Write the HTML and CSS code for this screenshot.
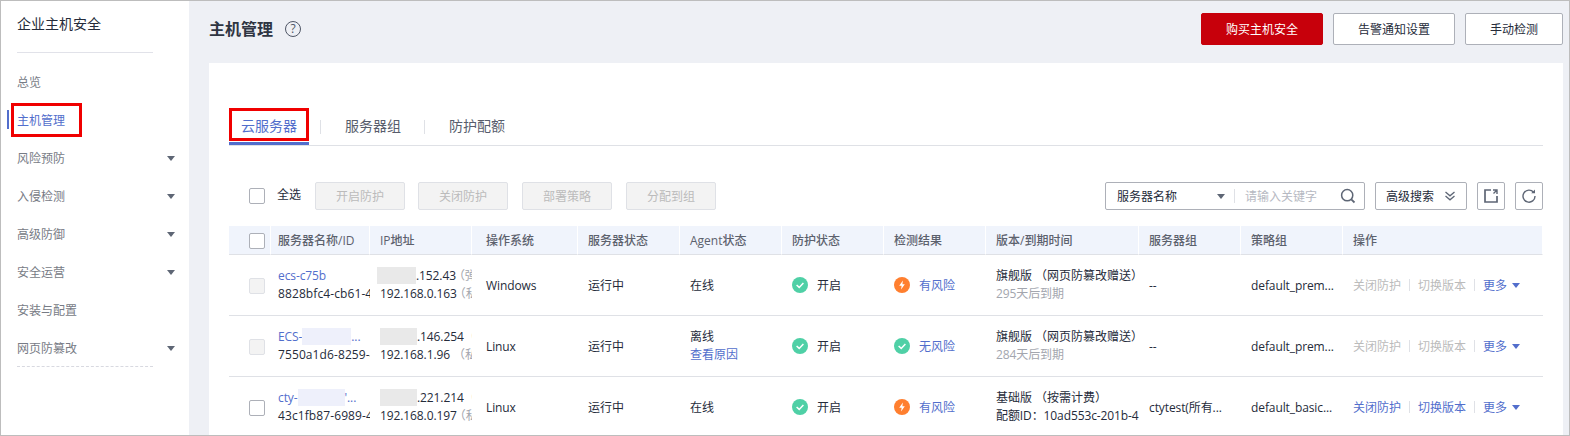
FILE: index.html
```html
<!DOCTYPE html>
<html lang="zh-CN">
<head>
<meta charset="utf-8">
<title>主机管理</title>
<link rel="stylesheet" href="styles.css">
</head>
<body>
<div class="frame">
  <aside class="sidebar">
    <div class="side-title">企业主机安全</div>
    <nav class="nav">
      <div class="nav-item">总览</div>
      <div class="nav-item active">主机管理<span class="side-bar"></span><span class="red-box nav-box"></span></div>
      <div class="nav-item">风险预防<span class="caret"></span></div>
      <div class="nav-item">入侵检测<span class="caret"></span></div>
      <div class="nav-item">高级防御<span class="caret"></span></div>
      <div class="nav-item">安全运营<span class="caret"></span></div>
      <div class="nav-item">安装与配置</div>
      <div class="nav-item">网页防篡改<span class="caret"></span></div>
    </nav>
    <div class="side-dash"></div>
  </aside>
  <main class="main">
    <header class="header">
      <div class="heading"><h1>主机管理</h1><span class="help">?</span></div>
      <div class="header-actions">
        <button class="btn primary">购买主机安全</button>
        <button class="btn wide">告警通知设置</button>
        <button class="btn manual">手动检测</button>
      </div>
    </header>
    <section class="card">
      <div class="tabs">
        <div class="tab current">云服务器<span class="red-box tab-box"></span></div>
        <span class="tab-sep first"></span>
        <div class="tab">服务器组</div>
        <span class="tab-sep"></span>
        <div class="tab">防护配额</div>
      </div>
      <div class="toolbar">
        <div class="toolbar-left">
          <span class="check"></span>
          <span class="all">全选</span>
          <button class="btn disabled">开启防护</button>
          <button class="btn disabled">关闭防护</button>
          <button class="btn disabled">部署策略</button>
          <button class="btn disabled">分配到组</button>
        </div>
        <div class="toolbar-right">
          <div class="search">
            <span class="search-field">服务器名称<span class="caret"></span></span>
            <span class="search-sep"></span>
            <span class="placeholder">请输入关键字</span>
            <svg class="search-icon" viewBox="0 0 16 16" width="16" height="16"><circle cx="7.2" cy="7.2" r="5.6" fill="none" stroke="#5e6675" stroke-width="1.5"/><path d="M11.3 11.3 14.5 14.5" stroke="#5e6675" stroke-width="1.8"/></svg>
          </div>
          <div class="advanced">高级搜索
            <svg viewBox="0 0 10 10" width="10" height="10"><path d="M0.5 1 5 4.8 9.5 1M0.5 5 5 8.8 9.5 5" fill="none" stroke="#5e6675" stroke-width="1.3"/></svg>
          </div>
          <div class="icon-btn">
            <svg viewBox="0 0 14 14" width="14" height="14"><path d="M7 1H1V13H13V7" fill="none" stroke="#5e6675" stroke-width="1.7"/><path d="M9 1H13V5M13 1 9.5 4.5" fill="none" stroke="#5e6675" stroke-width="1.4"/></svg>
          </div>
          <div class="icon-btn">
            <svg viewBox="0 0 14 14" width="14" height="14"><path d="M11.6 3.3A6 6 0 1 0 13 7" fill="none" stroke="#5e6675" stroke-width="1.4"/><path d="M9.2 4.2H13V0.6Z" fill="#5e6675"/></svg>
          </div>
        </div>
      </div>
      <table class="grid">
        <colgroup>
          <col class="c-check"><col class="c-name"><col class="c-ip"><col class="c-os"><col class="c-std"><col class="c-std"><col class="c-std"><col class="c-std"><col class="c-ver"><col class="c-std"><col class="c-std"><col class="c-op">
        </colgroup>
        <thead>
          <tr>
            <th class="pad-check"><span class="check"></span></th>
            <th class="pad-name">服务器名称/ID</th>
            <th>IP地址</th>
            <th class="pad-os">操作系统</th>
            <th>服务器状态</th>
            <th>Agent状态</th>
            <th>防护状态</th>
            <th>检测结果</th>
            <th>版本/到期时间</th>
            <th>服务器组</th>
            <th>策略组</th>
            <th>操作</th>
          </tr>
        </thead>
        <tbody>
          <tr>
            <td class="pad-check"><span class="check off"></span></td>
            <td class="pad-name"><div class="line link latin">ecs-c75b</div><div class="line id">8828bfc4-cb61-4</div></td>
            <td><div class="line latin"><span class="mask-ip first-ip"></span>.152.43<span class="muted tight">（弹</span></div><div class="line latin">192.168.0.163<span class="muted tight">（私</span></div></td>
            <td class="pad-os latin">Windows</td>
            <td>运行中</td>
            <td>在线</td>
            <td><div class="status"><svg viewBox="0 0 16 16" width="16" height="16"><circle cx="8" cy="8" r="8" fill="#4fd0a6"/><path d="M4.6 8 7.2 10.4 11.4 6" fill="none" stroke="#fff" stroke-width="1.5"/></svg>开启</div></td>
            <td><div class="status link"><svg viewBox="0 0 16 16" width="16" height="16"><circle cx="8" cy="8" r="8" fill="#ff7f2f"/><path d="M8.9 3.4 5.2 8.8H7.6L7.1 12.6 10.8 7.2H8.4Z" fill="#fff"/></svg>有风险</div></td>
            <td><div class="line">旗舰版 （网页防篡改赠送）</div><div class="line muted latin">295天后到期</div></td>
            <td>--</td>
            <td class="latin">default_prem...</td>
            <td><div class="ops"><span class="op-off">关闭防护</span><span class="op-sep"></span><span class="op-off">切换版本</span><span class="op-sep"></span><span class="link">更多</span><span class="caret blue"></span></div></td>
          </tr>
          <tr>
            <td class="pad-check"><span class="check off"></span></td>
            <td class="pad-name"><div class="line link latin">ECS-<span class="mask-name m-ecs"></span>...</div><div class="line id">7550a1d6-8259-4</div></td>
            <td><div class="line latin"><span class="mask-ip"></span>.146.254<span class="muted">（</span></div><div class="line latin">192.168.1.96 <span class="muted">（私</span></div></td>
            <td class="pad-os latin">Linux</td>
            <td>运行中</td>
            <td><div class="line">离线</div><div class="line link">查看原因</div></td>
            <td><div class="status"><svg viewBox="0 0 16 16" width="16" height="16"><circle cx="8" cy="8" r="8" fill="#4fd0a6"/><path d="M4.6 8 7.2 10.4 11.4 6" fill="none" stroke="#fff" stroke-width="1.5"/></svg>开启</div></td>
            <td><div class="status link"><svg viewBox="0 0 16 16" width="16" height="16"><circle cx="8" cy="8" r="8" fill="#4fd0a6"/><path d="M4.6 8 7.2 10.4 11.4 6" fill="none" stroke="#fff" stroke-width="1.5"/></svg>无风险</div></td>
            <td><div class="line">旗舰版 （网页防篡改赠送）</div><div class="line muted latin">284天后到期</div></td>
            <td>--</td>
            <td class="latin">default_prem...</td>
            <td><div class="ops"><span class="op-off">关闭防护</span><span class="op-sep"></span><span class="op-off">切换版本</span><span class="op-sep"></span><span class="link">更多</span><span class="caret blue"></span></div></td>
          </tr>
          <tr>
            <td class="pad-check"><span class="check"></span></td>
            <td class="pad-name"><div class="line link latin">cty-<span class="mask-name m-cty"></span>'...</div><div class="line id">43c1fb87-6989-4</div></td>
            <td><div class="line latin"><span class="mask-ip"></span>.221.214<span class="muted">（</span></div><div class="line latin">192.168.0.197<span class="muted tight">（私</span></div></td>
            <td class="pad-os latin">Linux</td>
            <td>运行中</td>
            <td>在线</td>
            <td><div class="status"><svg viewBox="0 0 16 16" width="16" height="16"><circle cx="8" cy="8" r="8" fill="#4fd0a6"/><path d="M4.6 8 7.2 10.4 11.4 6" fill="none" stroke="#fff" stroke-width="1.5"/></svg>开启</div></td>
            <td><div class="status link"><svg viewBox="0 0 16 16" width="16" height="16"><circle cx="8" cy="8" r="8" fill="#ff7f2f"/><path d="M8.9 3.4 5.2 8.8H7.6L7.1 12.6 10.8 7.2H8.4Z" fill="#fff"/></svg>有风险</div></td>
            <td><div class="line">基础版 （按需计费）</div><div class="line latin">配额ID：10ad553c-201b-4</div></td>
            <td class="latin">ctytest(所有...</td>
            <td class="latin">default_basic...</td>
            <td><div class="ops"><span class="link">关闭防护</span><span class="op-sep"></span><span class="link">切换版本</span><span class="op-sep"></span><span class="link">更多</span><span class="caret blue"></span></div></td>
          </tr>
        </tbody>
      </table>
    </section>
  </main>
</div>
</body>
</html>
```
FILE: styles.css
```css
* { box-sizing: border-box; }
html, body { margin: 0; padding: 0; }
body {
  width: 1570px;
  height: 436px;
  overflow: hidden;
  font-family: "Open Sans", "Noto Sans CJK SC", sans-serif;
  font-size: 12px;
  color: #252b3a;
}
.frame {
  display: flex;
  width: 100%;
  height: 100%;
  border: 1px solid #bdbdbd;
  background: #eef0f5;
  overflow: hidden;
}
.sidebar {
  flex: 0 0 188px;
  background: #fff;
}
.side-title {
  margin: 0 36px 0 16px;
  height: 52px;
  padding-top: 13px;
  font-size: 14px;
  line-height: 20px;
  border-bottom: 1px solid #e1e2e9;
}
.nav { margin-top: 10px; padding: 0 14px 0 16px; }
.nav-item {
  position: relative;
  display: flex;
  justify-content: space-between;
  align-items: center;
  height: 38px;
  color: #777b85;
}
.nav-item.active { color: #526ecc; }
.side-bar {
  position: absolute;
  left: -10px;
  top: 9px;
  width: 2px;
  height: 19px;
  background: #526ecc;
}
.red-box {
  position: absolute;
  border: 3px solid #f00000;
  pointer-events: none;
}
.nav-box { left: -6px; top: 2px; width: 71px; height: 34px; }
.caret {
  width: 0;
  height: 0;
  border-left: 4px solid transparent;
  border-right: 4px solid transparent;
  border-top: 5px solid #5e6675;
}
.caret.blue { border-top-color: #526ecc; margin-left: 5px; }
.side-dash {
  margin: -1px 36px 0 16px;
  border-top: 1px dashed #d8d9e0;
}
.main {
  flex: 1;
  min-width: 0;
  padding: 0 6px 0 20px;
}
.header {
  display: flex;
  justify-content: space-between;
  align-items: flex-start;
  height: 62px;
  padding-top: 12px;
}
.heading { display: flex; align-items: center; height: 32px; }
.heading h1 {
  margin: 0;
  font-size: 16px;
  line-height: 32px;
  font-weight: 700;
  color: #2f3542;
}
.help {
  display: flex;
  justify-content: center;
  align-items: center;
  width: 16px;
  height: 16px;
  margin-left: 12px;
  border: 1.4px solid #4f5666;
  border-radius: 50%;
  font-size: 12px;
  line-height: 1;
  color: #4f5666;
}
.header-actions { display: flex; gap: 10px; }
.btn {
  height: 32px;
  padding: 0;
  border: 1px solid #adb0b8;
  border-radius: 2px;
  background: #fff;
  font: inherit;
  color: #252b3a;
}
.btn.primary { width: 122px; background: #c7000b; border-color: #c7000b; color: #fff; }
.btn.wide { width: 122px; }
.btn.manual { width: 98px; }
.btn.disabled {
  width: 90px;
  height: 28px;
  background: #f3f3f3;
  border-color: #dfe1e6;
  color: #bbbbbb;
}
.card {
  height: 373px;
  padding: 45px 20px 0;
  background: #fff;
}
.tabs {
  display: flex;
  align-items: center;
  height: 38px;
  border-bottom: 1px solid #dfe1e6;
  font-size: 14px;
  color: #575d6c;
}
.tab { height: 37px; line-height: 36px; }
.tab.current {
  position: relative;
  width: 80px;
  padding-left: 12px;
  color: #526ecc;
  border-bottom: 3px solid #526ecc;
}
.tab-box { left: 0; top: 0; width: 80px; height: 33px; }
.tab-sep {
  width: 1px;
  height: 14px;
  margin: 0 24px 0 23px;
  background: #dfe1e6;
}
.tab-sep.first { margin-left: 11px; }
.toolbar {
  display: flex;
  justify-content: space-between;
  align-items: center;
  height: 28px;
  margin-top: 36px;
}
.toolbar-left { display: flex; align-items: center; padding-left: 20px; }
.toolbar-left .btn + .btn { margin-left: 14px; }
.toolbar-left .btn:nth-of-type(2) { margin-left: 13px; }
.all { margin: 0 14px 0 12px; color: #252b3a; position: relative; top: -2px; }
.check {
  display: inline-block;
  width: 16px;
  height: 16px;
  border: 1px solid #adb0b8;
  border-radius: 2px;
  background: #fff;
  vertical-align: middle;
}
.check.off { background: #f3f3f3; border-color: #dfe1e6; }
.toolbar-right { display: flex; align-items: center; gap: 10px; }
.search, .advanced, .icon-btn {
  display: flex;
  align-items: center;
  height: 28px;
  border: 1px solid #adb0b8;
  border-radius: 2px;
  background: #fff;
}
.search { width: 260px; padding-left: 11px; }
.search-field { display: flex; align-items: center; justify-content: space-between; width: 108px; }
.search-sep { width: 1px; height: 14px; margin: 0 10px 0 9px; background: #dfe1e6; }
.placeholder { width: 72px; color: #b6b9c2; }
.search-icon { margin-left: 23px; }
.advanced { width: 92px; padding-left: 10px; gap: 11px; }
.icon-btn { width: 28px; justify-content: center; }
.grid {
  width: 1314px;
  margin-top: 16px;
  border-collapse: separate;
  border-spacing: 0;
  table-layout: fixed;
}
.c-check { width: 42px; }
.c-name { width: 99px; }
.c-ip { width: 102px; }
.c-os { width: 106px; }
.c-std { width: 102px; }
.c-ver { width: 153px; }
.c-op { width: 200px; }
.grid th {
  height: 29px;
  padding: 0 0 0 10px;
  background: #f0f4fc;
  border-right: 1px solid #fff;
  border-bottom: 1px solid #dfe1e6;
  font-weight: 500;
  text-align: left;
  color: #5c616d;
  white-space: nowrap;
  overflow: hidden;
}
.grid td {
  height: 61px;
  padding: 0 0 0 10px;
  border-bottom: 1px solid #dfe1e6;
  white-space: nowrap;
  overflow: hidden;
  vertical-align: middle;
  color: #252b3a;
}
.grid .pad-check { padding-left: 20px; }
.grid .pad-name { padding-left: 7px; }
.grid .pad-os { padding-left: 14px; }
.line { line-height: 18px; height: 18px; white-space: nowrap; }
.latin { letter-spacing: -0.1px; }
.id { letter-spacing: 0.1px; }
.link { color: #526ecc; }
.muted { color: #a3a6ae; }
.muted.tight { margin-left: -3px; }
.mask-ip {
  display: inline-block;
  width: 37px;
  height: 17px;
  background: #e9e9e9;
  vertical-align: top;
}
.mask-ip.first-ip { width: 39px; margin-left: -3px; }
.mask-name {
  display: inline-block;
  height: 17px;
  background: #eef0fb;
  vertical-align: top;
}
.m-ecs { width: 49px; }
.m-cty { width: 47px; }
.status { display: flex; align-items: center; gap: 9px; }
.ops { display: flex; align-items: center; color: #252b3a; }
.op-off { color: #bbbbbb; }
.op-sep { width: 1px; height: 12px; margin: 0 8px; background: #dfe1e6; }
```
